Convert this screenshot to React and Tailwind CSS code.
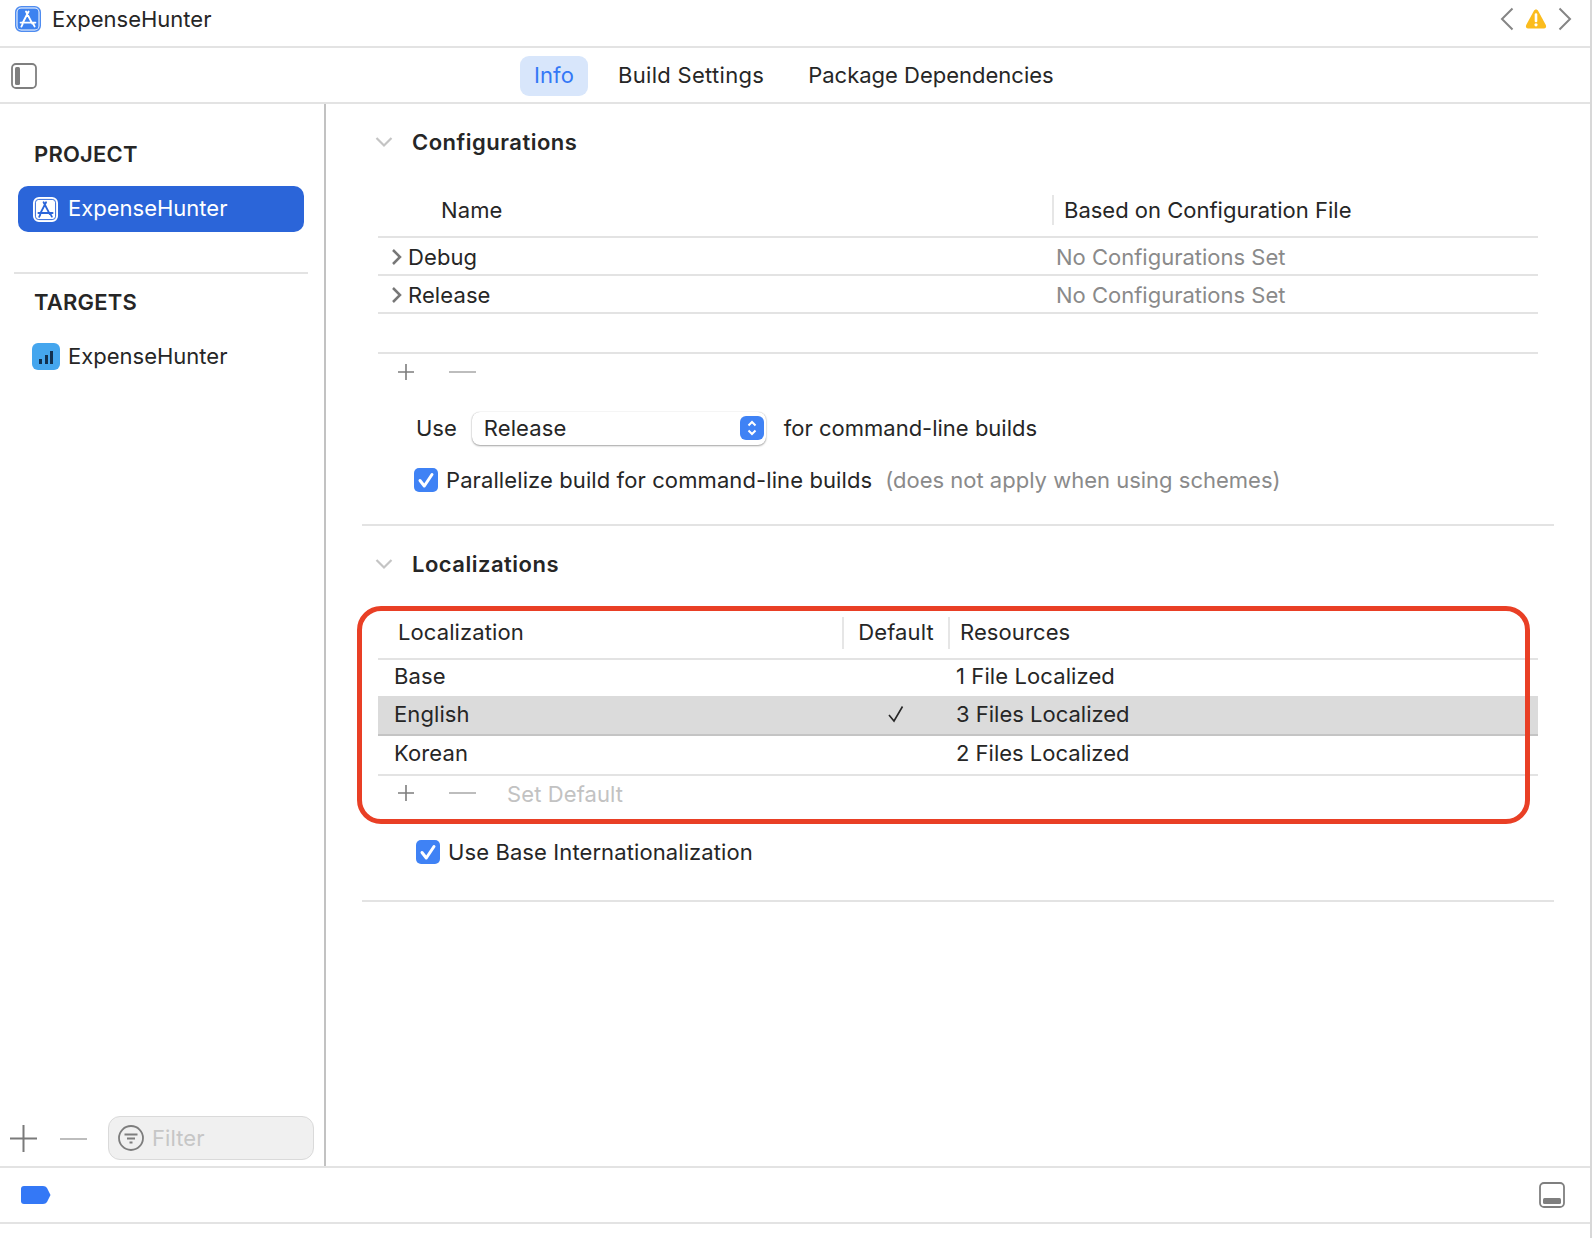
import React from "react";

function AppIcon({ mono = false, className = "" }) {
  const bg = mono ? "#2b65d9" : "#3d82f0";
  return (
    <svg viewBox="0 0 26 26" className={className}>
      <rect x="0.75" y="0.75" width="24.5" height="24.5" rx="5.5" fill="#ffffff" stroke={mono ? "#ffffff" : "#4f8cf0"} strokeWidth="1.5" />
      <rect x="2.5" y="2.5" width="21" height="21" rx="3.5" fill={mono ? "#ffffff" : bg} stroke={mono ? "#2b65d9" : "none"} strokeWidth={mono ? "1" : "0"} />
      <g stroke={mono ? "#2b65d9" : "#ffffff"} strokeWidth="1.9" strokeLinecap="round" fill="none">
        <path d="M13.6 5.5 L8 16.2 M11 5.5 L17.3 17.6 M5.6 16.6 H20.4 M7.6 18.2 L6.4 20.6 M18.2 17.8 L19.6 20.4" />
      </g>
    </svg>
  );
}

function Check() {
  return (
    <span className="w-6 h-6 rounded-[5px] bg-[#3f82f5] flex items-center justify-center shrink-0">
      <svg viewBox="0 0 24 24" className="w-6 h-6">
        <path d="M6 12.5 L10.3 18 L18 6.5" fill="none" stroke="#ffffff" strokeWidth="3" strokeLinecap="round" strokeLinejoin="round" />
      </svg>
    </span>
  );
}

function PlusMinus() {
  return (
    <div className="flex items-center">
      <svg viewBox="0 0 18 18" className="w-[18px] h-[18px] ml-[19px]">
        <path d="M9 1 V17 M1 9 H17" stroke="#7d7d7d" strokeWidth="1.6" />
      </svg>
      <div className="w-[27px] h-[2px] bg-[#bdbdbd] ml-[34px]" />
    </div>
  );
}

function Chevron({ className = "" }) {
  return (
    <svg viewBox="0 0 18 12" className={className}>
      <path d="M1.5 2 L9 9.5 L16.5 2" fill="none" stroke="#c4c4c4" strokeWidth="2.2" />
    </svg>
  );
}

function RowCaret() {
  return (
    <svg viewBox="0 0 11 18" className="w-[11px] h-[18px] ml-[13px] mr-[6px]">
      <path d="M2 2 L9 9 L2 16" fill="none" stroke="#777777" strokeWidth="2.5" />
    </svg>
  );
}

export default function App() {
  return (
    <div className="w-[1592px] h-[1238px] bg-white text-[#262626] flex flex-col border-r-2 border-[#d8d8d8] font-['Inter',sans-serif] text-[22px] tracking-[0.1px] leading-none overflow-hidden">
      <div className="h-[48px] shrink-0 border-b-2 border-[#e3e3e3] flex items-center pl-[15px] pr-[18px] pb-[11px] pt-[2px]">
        <AppIcon className="w-[26px] h-[26px]" />
        <span className="ml-[11px] tracking-normal">ExpenseHunter</span>
        <div className="ml-auto flex items-center">
          <svg viewBox="0 0 14 24" className="w-[14px] h-[24px]">
            <path d="M12.5 1.5 L2 12 L12.5 22.5" fill="none" stroke="#858585" strokeWidth="2" />
          </svg>
          <svg viewBox="0 0 22 22" className="w-[22px] h-[22px] ml-[11px]">
            <path d="M11 1.5 C12 1.5 12.6 2 13.2 3 L20.8 17 C21.6 18.7 20.8 20.5 18.8 20.5 H3.2 C1.2 20.5 0.4 18.7 1.2 17 L8.8 3 C9.4 2 10 1.5 11 1.5 Z" fill="#fbbc1d" />
            <path d="M11 6.5 V13" stroke="#ffffff" strokeWidth="2.6" strokeLinecap="round" />
            <circle cx="11" cy="16.8" r="1.6" fill="#ffffff" />
          </svg>
          <svg viewBox="0 0 14 24" className="w-[14px] h-[24px] ml-[11px]">
            <path d="M1.5 1.5 L12 12 L1.5 22.5" fill="none" stroke="#858585" strokeWidth="2" />
          </svg>
        </div>
      </div>

      <div className="h-[56px] shrink-0 border-b-2 border-[#e3e3e3] flex items-center relative pl-[11px] pt-[2px]">
        <svg viewBox="0 0 26 26" className="w-[26px] h-[26px] absolute left-[11px] top-[15px]">
          <rect x="1" y="1" width="24" height="24" rx="4" fill="none" stroke="#7f7f7f" strokeWidth="1.8" />
          <rect x="4" y="4" width="5" height="18" rx="1.5" fill="#7f7f7f" />
        </svg>
        <div className="flex items-center ml-[509px] h-[40px]">
          <span className="h-[40px] w-[68px] pb-[2px] rounded-[9px] bg-[#d8e6fb] text-[#3478f6] flex items-center justify-center">Info</span>
          <span className="ml-[30px] mb-[2px] tracking-[0.3px]">Build Settings</span>
          <span className="ml-[44px] mb-[2px] tracking-normal">Package Dependencies</span>
        </div>
      </div>

      <div className="flex-1 flex min-h-0">
        <aside className="w-[326px] shrink-0 border-r-2 border-[#c2c2c2] flex flex-col">
          <div className="pl-[34px] pt-[39px] h-[82px] font-semibold tracking-[0.2px]">PROJECT</div>
          <div className="ml-[18px] w-[286px] h-[46px] rounded-[10px] bg-[#2b65d9] text-white flex items-center pl-[15px]">
            <AppIcon mono className="w-[25px] h-[25px]" />
            <span className="ml-[10px] mb-[2px] tracking-normal">ExpenseHunter</span>
          </div>
          <div className="ml-[14px] w-[294px] h-[2px] bg-[#e3e3e3] mt-[40px]" />
          <div className="pl-[34px] pt-[17px] h-[54px] font-semibold tracking-[0.2px]">TARGETS</div>
          <div className="h-[46px] flex items-center pl-[32px] mt-[5px]">
            <span className="w-[28px] h-[27px] rounded-[6px] bg-[#45a6ee] flex items-end justify-center gap-[2.5px] pb-[6px]">
              <span className="w-[3px] h-[5px] bg-[#12304f]" />
              <span className="w-[3px] h-[9px] bg-[#12304f]" />
              <span className="w-[3px] h-[13px] bg-[#12304f]" />
            </span>
            <span className="ml-[8px] tracking-normal">ExpenseHunter</span>
          </div>
          <div className="mt-auto h-[56px] flex items-center pl-[10px]">
            <svg viewBox="0 0 27 27" className="w-[27px] h-[27px]">
              <path d="M13.5 0 V27 M0 13.5 H27" stroke="#7a7a7a" strokeWidth="2" />
            </svg>
            <div className="w-[27px] h-[2px] bg-[#bdbdbd] ml-[23px] mt-[2px]" />
            <div className="ml-[21px] w-[206px] h-[44px] rounded-[12px] bg-[#f0f0f0] border-[1.5px] border-[#dadada] flex items-center pl-[9px]">
              <svg viewBox="0 0 26 26" className="w-[26px] h-[26px]">
                <circle cx="13" cy="13" r="12" fill="none" stroke="#7d7d7d" strokeWidth="1.8" />
                <path d="M6.5 9.5 H19.5 M9 13.5 H17 M11.5 17.5 H14.5" stroke="#7d7d7d" strokeWidth="1.8" />
              </svg>
              <span className="ml-[8px] text-[#c6c6c6]">Filter</span>
            </div>
          </div>
        </aside>

        <main className="flex-1 pl-[36px] pr-[36px]">
          <div className="h-[76px] flex items-center font-semibold tracking-[0.5px]">
            <Chevron className="w-[18px] h-[12px] ml-[13px] mr-[19px]" />
            <span>Configurations</span>
          </div>
          <div className="mx-[16px]">
            <div className="mt-[11px] h-[47px] pt-[2px] pb-[9px] border-b-2 border-[#e3e3e3] flex items-center">
              <span className="ml-[63px] w-[611px]">Name</span>
              <span className="w-[2px] h-[30px] bg-[#e6e6e6]" />
              <span className="ml-[10px] tracking-normal">Based on Configuration File</span>
            </div>
            <div className="h-[38px] pt-[2px] border-b-2 border-[#e3e3e3] flex items-center">
              <RowCaret />
              <span className="w-[648px]">Debug</span>
              <span className="text-[#8a8a8a] tracking-normal">No Configurations Set</span>
            </div>
            <div className="h-[38px] pt-[2px] border-b-2 border-[#e3e3e3] flex items-center">
              <RowCaret />
              <span className="w-[648px]">Release</span>
              <span className="text-[#8a8a8a] tracking-normal">No Configurations Set</span>
            </div>
            <div className="h-[40px] border-b-2 border-[#e3e3e3]" />
            <div className="h-[36px] flex items-center">
              <PlusMinus />
            </div>
            <div className="mt-[22px] h-[34px] flex items-center ml-[38px]">
              <span className="mb-[2px] tracking-normal">Use</span>
              <div className="ml-[15px] w-[294px] h-[33px] mb-[2px] rounded-[8px] bg-white shadow-[0_1px_2px_rgba(0,0,0,0.35),0_0_1px_rgba(0,0,0,0.25)] flex items-center pl-[12px] pr-[2px]">
                <span>Release</span>
                <span className="ml-auto w-[24px] h-[24px] rounded-[6px] bg-[#3f82f5] flex items-center justify-center">
                  <svg viewBox="0 0 24 24" className="w-6 h-6">
                    <path d="M8.5 9.5 L12 6 L15.5 9.5 M8.5 14.5 L12 18 L15.5 14.5" fill="none" stroke="#ffffff" strokeWidth="2" />
                  </svg>
                </span>
              </div>
              <span className="ml-[18px] mb-[2px] tracking-normal">for command-line builds</span>
            </div>
            <div className="mt-[22px] h-[24px] flex items-center ml-[36px]">
              <Check />
              <span className="ml-[8px]">Parallelize build for command-line builds</span>
              <span className="ml-[13px] text-[#8a8a8a] tracking-normal">(does not apply when using schemes)</span>
            </div>
          </div>
          <div className="h-[2px] bg-[#e3e3e3] mt-[32px]" />

          <div className="h-[76px] flex items-center font-semibold tracking-[0.5px]">
            <Chevron className="w-[18px] h-[12px] ml-[13px] mr-[19px]" />
            <span>Localizations</span>
          </div>

          <div className="relative mx-[16px]">
            <div className="absolute left-[-21px] top-[4px] w-[1173px] h-[218px] border-[5px] border-[#e93f25] rounded-[24px] pointer-events-none" />
            <div className="pt-[15px] h-[58px] border-b-2 border-[#e3e3e3] flex items-start">
              <span className="h-[32px] pb-[2px] flex items-center ml-[20px] w-[444px]">Localization</span>
              <span className="w-[2px] h-[32px] bg-[#e6e6e6]" />
              <span className="h-[32px] pb-[2px] flex items-center justify-center w-[104px]">Default</span>
              <span className="w-[2px] h-[32px] bg-[#e6e6e6]" />
              <span className="h-[32px] pb-[2px] flex items-center ml-[10px]">Resources</span>
            </div>
            <div className="h-[36px] flex items-center pb-[5px]">
              <span className="ml-[16px] w-[562px]">Base</span>
              <span>1 File Localized</span>
            </div>
            <div className="h-[40px] pb-[2px] bg-[#dbdbdb] border-b-2 border-[#c4c4c4] flex items-center">
              <span className="ml-[16px] w-[492px]">English</span>
              <span className="w-[70px] flex">
                <svg viewBox="0 0 18 18" className="w-[18px] h-[18px] ml-[1px]">
                  <path d="M2 10 L7 16 L15.5 1.5" fill="none" stroke="#262626" strokeWidth="1.6" />
                </svg>
              </span>
              <span className="tracking-normal">3 Files Localized</span>
            </div>
            <div className="h-[40px] pb-[5px] border-b-2 border-[#e3e3e3] flex items-center">
              <span className="ml-[16px] w-[562px]">Korean</span>
              <span className="tracking-normal">2 Files Localized</span>
            </div>
            <div className="h-[40px] pb-[4px] flex items-center">
              <div className="mb-[2px]">
                <PlusMinus />
              </div>
              <span className="ml-[31px] text-[#c2c2c2]">Set Default</span>
            </div>
          </div>

          <div className="ml-[54px] mt-[24px] h-[24px] flex items-center">
            <Check />
            <span className="ml-[8px]">Use Base Internationalization</span>
          </div>
          <div className="h-[2px] bg-[#e3e3e3] mt-[36px]" />
        </main>
      </div>

      <div className="h-[58px] shrink-0 border-y-2 border-[#e3e3e3] flex items-center pl-[21px] pr-[25px]">
        <svg viewBox="0 0 30 18" className="w-[30px] h-[18px]">
          <path d="M3 0 H22 C24 0 25 0.8 26 2 L29.5 9 L26 16 C25 17.2 24 18 22 18 H3 C1 18 0 17 0 15 V3 C0 1 1 0 3 0 Z" fill="#3478f6" />
        </svg>
        <svg viewBox="0 0 26 26" className="w-[26px] h-[26px] ml-auto">
          <rect x="1" y="1" width="24" height="24" rx="4" fill="none" stroke="#7f7f7f" strokeWidth="1.8" />
          <rect x="4" y="16" width="18" height="6" rx="1.5" fill="#7f7f7f" />
        </svg>
      </div>
      <div className="h-[14px] shrink-0" />
    </div>
  );
}
